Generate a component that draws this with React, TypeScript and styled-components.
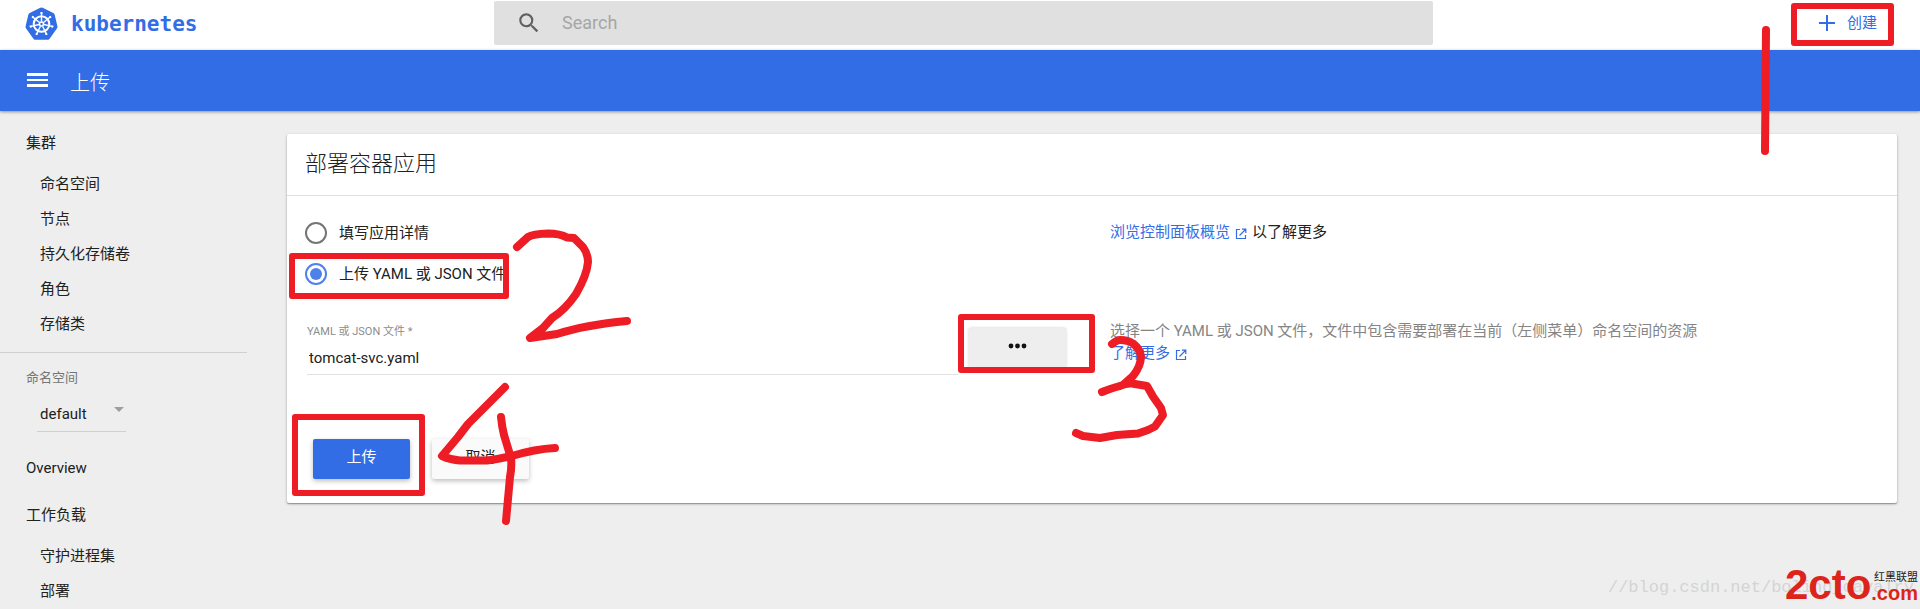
import React, { useState } from 'react';
import styled, { createGlobalStyle } from 'styled-components';

const blue = '#326de6';
const red = '#ee1c25';

const GlobalStyle = createGlobalStyle`
  *, *::before, *::after { box-sizing: border-box; }
  body {
    margin: 0;
    background: #eee;
    color: #212121;
    font-family: Roboto, 'Noto Sans CJK SC', sans-serif;
    font-size: 15px;
    line-height: 22px;
  }
  button, input, select { font: inherit; color: inherit; }
`;

const Page = styled.div`
  position: relative;
  display: flex;
  flex-direction: column;
  height: 100vh;
  overflow: hidden;
`;

const TopBar = styled.header`
  flex: none;
  display: grid;
  grid-template-columns: 494px minmax(0, 1fr) 487px;
  height: 50px;
  background: #fff;
`;

const Brand = styled.a`
  display: flex;
  align-items: center;
  gap: 13px;
  height: 48px;
  padding-left: 25px;
  color: ${blue};
  font: bold 21px/24px 'DejaVu Sans Mono', monospace;
  text-decoration: none;
`;

const SearchBox = styled.label`
  display: flex;
  align-items: center;
  gap: 20px;
  height: 44px;
  margin-top: 1px;
  padding-left: 22px;
  border-radius: 2px;
  background: #e0e0e0;
`;

const SearchInput = styled.input`
  flex: 1;
  min-width: 0;
  border: 0;
  padding: 0;
  outline: 0;
  background: transparent;
  font-size: 18px;
  &::placeholder { color: #a6a6a6; opacity: 1; }
`;

const TopActions = styled.div`
  display: flex;
  justify-content: flex-end;
  align-items: center;
  height: 46px;
  padding-right: 43px;
`;

const CreateButton = styled.button`
  display: flex;
  align-items: center;
  gap: 8px;
  border: 0;
  padding: 0;
  background: none;
  color: ${blue};
  cursor: pointer;
`;

const ActionBar = styled.div`
  position: relative;
  flex: none;
  display: flex;
  align-items: center;
  gap: 19px;
  height: 61px;
  padding-left: 23px;
  background: ${blue};
  color: #fff;
  box-shadow: 0 1px 3px rgba(0, 0, 0, 0.4);
`;

const MenuButton = styled.button`
  display: flex;
  border: 0;
  padding: 0;
  background: none;
  color: #fff;
  cursor: pointer;
`;

const PageTitle = styled.h1`
  margin: 0;
  padding-top: 4px;
  font-size: 20px;
  font-weight: 300;
  line-height: 28px;
`;

const Body = styled.div`
  flex: 1;
  display: flex;
  min-height: 0;
`;

const Sidebar = styled.nav`
  flex: none;
  width: 247px;
  padding-top: 9px;
  overflow-y: auto;
  scrollbar-width: none;
`;

const NavLink = styled.a<{ $nested?: boolean }>`
  display: block;
  padding-left: ${(p) => (p.$nested ? 40 : 26)}px;
  line-height: ${(p) => (p.$nested ? 35 : 47)}px;
  color: inherit;
  text-decoration: none;
`;

const Namespace = styled.div`
  display: flex;
  flex-direction: column;
  align-items: flex-start;
  height: 93px;
  margin-top: 10px;
  padding: 14px 0 0 26px;
  border-top: 1px solid #cfcfcf;
`;

const NamespaceLabel = styled.label`
  color: #757575;
  font-size: 13px;
`;

const SelectBox = styled.div`
  display: flex;
  align-items: center;
  width: 89px;
  height: 43px;
  margin-left: 11px;
  border-bottom: 1px solid #cfcfcf;
`;

const Select = styled.select`
  flex: 1;
  min-width: 0;
  height: 28px;
  margin-top: 8px;
  border: 0;
  padding: 0 0 0 3px;
  appearance: none;
  outline: 0;
  background: transparent;
`;

const Content = styled.main`
  flex: 1;
  min-width: 0;
  padding: 23px 23px 0 40px;
`;

const Card = styled.section`
  border-radius: 2px;
  background: #fff;
  box-shadow: 0 1px 3px rgba(0, 0, 0, 0.28), 0 1px 1px rgba(0, 0, 0, 0.24);
`;

const CardTitle = styled.h2`
  margin: 0;
  padding: 15px 18px 16px;
  border-bottom: 1px solid #e0e0e0;
  font-size: 22px;
  font-weight: 300;
  line-height: 30px;
`;

const Form = styled.form`
  padding: 16px 18px 24px;
`;

const Columns = styled.div`
  display: grid;
  grid-template-columns: repeat(2, minmax(0, 1fr));
  column-gap: 36px;
`;

const RadioRow = styled.label`
  display: flex;
  align-items: center;
  gap: 12px;
  height: 41px;
`;

const Radio = styled.input`
  display: grid;
  place-items: center;
  width: 22px;
  height: 22px;
  margin: 0;
  border: 2px solid #757575;
  border-radius: 50%;
  appearance: none;
  &:checked { border-color: #4e82ea; }
  &:checked::before {
    content: '';
    width: 12px;
    height: 12px;
    border-radius: 50%;
    background: #4e82ea;
  }
`;

const Note = styled.p<{ $muted?: boolean }>`
  margin: 0;
  padding-top: ${(p) => (p.$muted ? 26 : 9)}px;
  color: ${(p) => (p.$muted ? '#858585' : 'inherit')};
`;

const Link = styled.a`
  color: ${blue};
  text-decoration: none;
`;

const LinkIcon = styled.svg`
  margin: 0 5px;
  vertical-align: -3px;
`;

const FileRow = styled.div`
  display: flex;
  gap: 11px;
  padding: 24px 8px 0 2px;
`;

const Field = styled.div`
  flex: 1;
  display: flex;
  flex-direction: column;
  min-width: 0;
  height: 57px;
  border-bottom: 1px solid #e0e0e0;
`;

const FieldLabel = styled.label`
  padding-top: 5px;
  color: #8c8c8c;
  font-size: 11px;
  line-height: 18px;
`;

const FieldInput = styled.input`
  width: 100%;
  height: 30px;
  margin-top: 2px;
  border: 0;
  padding: 0 2px;
  outline: 0;
  background: transparent;
`;

const Button = styled.button<{ $tone: 'primary' | 'plain' | 'browse' }>`
  display: flex;
  align-items: center;
  justify-content: center;
  width: 97px;
  height: 40px;
  border: 0;
  border-radius: 2px;
  padding: 0 0 4px;
  background: ${(p) => ({ primary: blue, plain: '#fafafa', browse: '#eee' })[p.$tone]};
  color: ${(p) => (p.$tone === 'primary' ? '#fff' : '#212121')};
  box-shadow: ${(p) =>
    p.$tone === 'browse' ? '0 0 3px rgba(0, 0, 0, 0.2)' : '0 2px 5px rgba(0, 0, 0, 0.26)'};
  cursor: pointer;
`;

const BrowseSlot = styled.div`
  padding-top: 10px;
`;

const Buttons = styled.div`
  display: flex;
  gap: 22px;
  padding: 64px 8px 0;
`;

const Markup = styled.svg`
  position: absolute;
  top: 0;
  left: 0;
  width: 100%;
  height: 100%;
  pointer-events: none;
`;

const Watermark = styled.div`
  position: absolute;
  right: 6px;
  bottom: 9px;
  color: #d4d4d4;
  font: 17px/24px 'Liberation Mono', monospace;
  pointer-events: none;
`;

const SiteMark = styled.div`
  position: absolute;
  right: 2px;
  bottom: 5px;
  display: flex;
  align-items: flex-end;
  color: #dc241b;
  font-family: 'Liberation Sans', sans-serif;
  font-weight: bold;
  pointer-events: none;
`;

const SiteName = styled.span`
  font-size: 42px;
  line-height: 38px;
`;

const SiteSide = styled.span`
  display: flex;
  flex-direction: column;
  align-items: flex-end;
  font-size: 20px;
  line-height: 22px;
`;

const SiteCaption = styled.span`
  color: #222;
  font: 11px/12px 'Noto Sans CJK SC', sans-serif;
`;

const spokes = Array.from({ length: 7 }, (_, i) => (i * 360) / 7);

const KubernetesLogo = () => (
  <svg width="33" height="34" viewBox="0 0 33 34" aria-hidden="true">
    <path
      d="M15.3 .8Q16.5 .2 17.7 .8L28.3 5.9Q29.4 6.5 29.7 7.7L32.4 19.2Q32.7 20.5 31.9 21.5L24.4 31.9Q23.6 32.8 22.3 32.8H10.7Q9.4 32.8 8.6 31.9L1.1 21.5Q.3 20.5.6 19.2L3.3 7.7Q3.6 6.5 4.7 5.9Z"
      fill={blue}
    />
    <g fill="none" stroke="#fff">
      <circle cx="16.5" cy="17" r="7.8" strokeWidth="2" />
      {spokes.map((a) => (
        <path key={a} d="M16.5 14.5V5" strokeWidth="1.4" transform={`rotate(${a} 16.5 17)`} />
      ))}
      {spokes.map((a) => (
        <path key={a} d="M16.5 7V5" strokeWidth="2" transform={`rotate(${a} 16.5 17)`} />
      ))}
      <circle cx="16.5" cy="17" r="2" strokeWidth="1.6" />
    </g>
  </svg>
);

const ExternalIcon = () => (
  <LinkIcon width="12" height="12" viewBox="0 0 12 12" fill="none" stroke={blue} strokeWidth="1.2" aria-hidden="true">
    <path d="M5 1.5H1.5V10.5H10.5V7M7 1.2H10.8V5M10.5 1.5L4.5 7.5" />
  </LinkIcon>
);

const clusterItems = ['命名空间', '节点', '持久化存储卷', '角色', '存储类'];
const workloadItems = ['守护进程集', '部署'];

export default function App() {
  const [mode, setMode] = useState('file');

  return (
    <Page>
      <GlobalStyle />
      <TopBar>
        <Brand href="#">
          <KubernetesLogo />
          kubernetes
        </Brand>
        <SearchBox>
          <svg width="26" height="26" viewBox="0 0 24 24" fill="#616161" aria-hidden="true">
            <path d="M15.5 14h-.79l-.28-.27A6.47 6.47 0 0 0 16 9.5 6.5 6.5 0 1 0 9.5 16c1.61 0 3.09-.59 4.23-1.57l.27.28v.79l5 4.99L20.49 19l-4.99-5zm-6 0C7.01 14 5 11.99 5 9.5S7.01 5 9.5 5 14 7.01 14 9.5 11.99 14 9.5 14z" />
          </svg>
          <SearchInput type="text" placeholder="Search" aria-label="Search" />
        </SearchBox>
        <TopActions>
          <CreateButton type="button">
            <svg width="24" height="24" viewBox="0 0 24 24" fill={blue} aria-hidden="true">
              <path d="M11 4h2v7h7v2h-7v7h-2v-7H4v-2h7z" />
            </svg>
            创建
          </CreateButton>
        </TopActions>
      </TopBar>
      <ActionBar>
        <MenuButton type="button" aria-label="Menu">
          <svg width="28" height="28" viewBox="0 0 28 28" fill="#fff" aria-hidden="true">
            <path d="M4 6h21v3H4zM4 12h21v2H4zM4 17h21v3H4z" />
          </svg>
        </MenuButton>
        <PageTitle>上传</PageTitle>
      </ActionBar>
      <Body>
        <Sidebar>
          <NavLink href="#">集群</NavLink>
          {clusterItems.map((t) => (
            <NavLink href="#" $nested key={t}>{t}</NavLink>
          ))}
          <Namespace>
            <NamespaceLabel htmlFor="namespace">命名空间</NamespaceLabel>
            <SelectBox>
              <Select id="namespace">
                <option>default</option>
              </Select>
              <svg width="12" height="6" viewBox="0 0 12 6" fill="#9e9e9e" aria-hidden="true">
                <path d="M0 0H10L5 5z" />
              </svg>
            </SelectBox>
          </Namespace>
          <NavLink href="#">Overview</NavLink>
          <NavLink href="#">工作负载</NavLink>
          {workloadItems.map((t) => (
            <NavLink href="#" $nested key={t}>{t}</NavLink>
          ))}
        </Sidebar>
        <Content>
          <Card>
            <CardTitle>部署容器应用</CardTitle>
            <Form onSubmit={(e) => e.preventDefault()}>
              <Columns>
                <div>
                  <RadioRow>
                    <Radio type="radio" name="mode" checked={mode === 'details'} onChange={() => setMode('details')} />
                    填写应用详情
                  </RadioRow>
                  <RadioRow>
                    <Radio type="radio" name="mode" checked={mode === 'file'} onChange={() => setMode('file')} />
                    上传 YAML 或 JSON 文件
                  </RadioRow>
                </div>
                <Note>
                  <Link href="#">浏览控制面板概览<ExternalIcon /></Link>
                  以了解更多
                </Note>
                <FileRow>
                  <Field>
                    <FieldLabel htmlFor="file-name">YAML 或 JSON 文件 *</FieldLabel>
                    <FieldInput id="file-name" type="text" readOnly value="tomcat-svc.yaml" />
                  </Field>
                  <BrowseSlot>
                    <Button type="button" $tone="browse" aria-label="Browse">
                      <svg width="20" height="6" viewBox="0 0 20 6" fill="#111" aria-hidden="true">
                        <circle cx="3" cy="3" r="2.4" />
                        <circle cx="9.5" cy="3" r="2.4" />
                        <circle cx="16" cy="3" r="2.4" />
                      </svg>
                    </Button>
                  </BrowseSlot>
                </FileRow>
                <Note $muted>
                  选择一个 YAML 或 JSON 文件，文件中包含需要部署在当前（左侧菜单）命名空间的资源
                  <br />
                  <Link href="#">了解更多<ExternalIcon /></Link>
                </Note>
              </Columns>
              <Buttons>
                <Button type="submit" $tone="primary">上传</Button>
                <Button type="button" $tone="plain">取消</Button>
              </Buttons>
            </Form>
          </Card>
        </Content>
      </Body>
      <Watermark>//blog.csdn.net/boling_cavalry</Watermark>
      <SiteMark>
        <SiteName>2cto</SiteName>
        <SiteSide>
          <SiteCaption>红黑联盟</SiteCaption>
          .com
        </SiteSide>
      </SiteMark>
      <Markup fill="none" stroke={red} strokeLinecap="round" strokeLinejoin="round" aria-hidden="true">
        <g strokeWidth="6">
          <rect x="1794" y="6" width="97" height="37" />
          <rect x="292" y="256" width="214" height="40" />
          <rect x="961" y="317" width="131" height="53" />
          <rect x="295" y="417" width="127" height="76" />
        </g>
        <g strokeWidth="8">
          <path d="M1766 30L1765 151" />
          <path d="M517 247L528 237Q533 234 548 233.5Q560 233.5 567 237.5L574 238L583 247Q588 254 588 262Q587 275 576 294Q565 310 552 318L543 328L530 338L557 334Q585 325 627 321" />
          <path d="M1112 344Q1117 340 1120 340Q1128 340 1133 343.5Q1140 349 1141 356Q1141 366 1133 376L1123 385Q1112 388 1102 392M1120 386Q1126 383 1132 383.5L1147 386L1153 396.5L1161 408L1163 415L1155 426.5L1148 430L1138 433.5L1117 435L1100 438L1083 436L1076 433" />
          <path d="M505 387L468 424L458 437L442 456Q451 460 460 460.5H487Q500 459 512 456Q535 449 555 448M501 417Q502 427 504 435L511 458Q512 467 510 477L506 521" />
        </g>
      </Markup>
    </Page>
  );
}
